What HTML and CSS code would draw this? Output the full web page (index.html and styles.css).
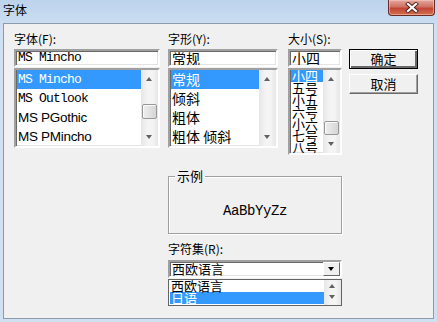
FILE: index.html
```html
<!DOCTYPE html>
<html lang="zh-CN">
<head>
    <meta charset="UTF-8">
    <title>字体</title>
    <link rel="stylesheet" href="styles.css">
</head>
<body>
    <div class="window">
        <div class="titlebar">
            <span class="title">字体</span>
            <button class="close-btn" aria-label="关闭">
                <svg width="14" height="11" viewBox="0 0 14 11">
                    <path d="M3 2 L11 9 M11 2 L3 9" stroke="#4a2320" stroke-width="4" stroke-linecap="square"/>
                    <path d="M3 2 L11 9 M11 2 L3 9" stroke="#fff" stroke-width="2.2" stroke-linecap="square"/>
                </svg>
            </button>
        </div>

        <div class="client">
            <div class="top-row">
                <!-- Font name -->
                <div class="col col-font">
                    <div class="label">字体(F):</div>
                    <div class="field mono">MS Mincho</div>
                    <div class="listbox list-font">
                        <ul class="items">
                            <li class="item selected mono">MS Mincho</li>
                            <li class="item mono">MS Outlook</li>
                            <li class="item sans">MS PGothic</li>
                            <li class="item sans">MS PMincho</li>
                        </ul>
                        <div class="scrollbar">
                            <div class="arrow up"></div>
                            <div class="track"><div class="thumb" style="margin-top: 17px; height: 15px;"></div></div>
                            <div class="arrow down"></div>
                        </div>
                    </div>
                </div>

                <!-- Font style -->
                <div class="col col-style">
                    <div class="label">字形(Y):</div>
                    <div class="field">常规</div>
                    <div class="listbox list-style">
                        <ul class="items">
                            <li class="item selected">常规</li>
                            <li class="item">倾斜</li>
                            <li class="item">粗体</li>
                            <li class="item">粗体 倾斜</li>
                        </ul>
                        <div class="scrollbar">
                            <div class="arrow up"></div>
                            <div class="track"></div>
                            <div class="arrow down"></div>
                        </div>
                    </div>
                </div>

                <!-- Size -->
                <div class="col col-size">
                    <div class="label">大小(S):</div>
                    <div class="field">小四</div>
                    <div class="listbox list-size">
                        <ul class="items">
                            <li class="item selected">小四</li>
                            <li class="item">五号</li>
                            <li class="item">小五</li>
                            <li class="item">六号</li>
                            <li class="item">小六</li>
                            <li class="item">七号</li>
                            <li class="item">八号</li>
                        </ul>
                        <div class="scrollbar">
                            <div class="arrow up"></div>
                            <div class="track"><div class="thumb" style="margin-top: 34px; height: 14px;"></div></div>
                            <div class="arrow down"></div>
                        </div>
                    </div>
                </div>

                <!-- Buttons -->
                <div class="col col-buttons">
                    <button class="btn default">确定</button>
                    <button class="btn">取消</button>
                </div>
            </div>

            <div class="lower">
                <div class="sample">
                    <span class="sample-label">示例</span>
                    <span class="sample-text">AaBbYyZz</span>
                </div>

                <div class="label charset-label">字符集(R):</div>
                <div class="combo">
                    <span class="combo-value">西欧语言</span>
                    <span class="combo-btn"></span>
                </div>
                <div class="dropdown">
                    <ul class="items">
                        <li class="item">西欧语言</li>
                        <li class="item selected">日语</li>
                    </ul>
                    <div class="scrollbar">
                        <div class="arrow up"></div>
                        <div class="arrow down"></div>
                    </div>
                </div>
            </div>
        </div>
    </div>
</body>
</html>
```

FILE: styles.css
```css
/* General */
* {
    box-sizing: border-box;
}

body {
    margin: 0;
    width: 437px;
    height: 322px;
    overflow: hidden;
    font-family: "Noto Sans CJK SC", "Liberation Sans", sans-serif;
    font-size: 12px;
    color: #000;
}

ul {
    list-style: none;
    margin: 0;
    padding: 0;
}

.mono {
    font-family: "Liberation Mono", "Noto Sans CJK SC", monospace;
    letter-spacing: -0.8px;
}

.sans {
    font-family: "Liberation Sans", sans-serif;
}

/* Window frame */
.window {
    height: 322px;
    display: flex;
    flex-direction: column;
    padding: 0 3px 3px;
    background: linear-gradient(#bcd3ec, #cfe0f3 30px, #cfe0f3);
}

.titlebar {
    height: 23px;
    display: flex;
    align-items: flex-start;
    justify-content: space-between;
    flex-shrink: 0;
}

.title {
    font-size: 12px;
    line-height: 14px;
    margin-top: 3px;
}

.close-btn {
    width: 47px;
    height: 16px;
    margin-right: -1px;
    padding: 0;
    border: 1px solid #6b2b24;
    border-top: none;
    border-radius: 0 0 4px 4px;
    background: linear-gradient(#e3a79d, #cf7262 45%, #c24534 55%, #d0704f);
    box-shadow: inset 0 0 0 1px rgba(255, 210, 200, 0.5);
    display: flex;
    align-items: center;
    justify-content: center;
}

/* Client area */
.client {
    flex: 1;
    background-color: #f0f0f0;
    border: 1px solid #8d9aab;
    padding: 8px 0 0 10px;
}

.top-row {
    display: flex;
    align-items: flex-start;
}

.col {
    display: flex;
    flex-direction: column;
}

.col-font {
    width: 146px;
    margin-right: 8px;
}

.col-style {
    width: 110px;
    margin-right: 10px;
}

.col-size {
    width: 54px;
    margin-right: 7px;
}

.col-buttons {
    width: 69px;
    padding-top: 17px;
    gap: 5px;
}

.label {
    height: 14px;
    line-height: 14px;
    margin-bottom: 3px;
    white-space: nowrap;
}

/* Sunken boxes */
.field,
.listbox,
.combo {
    background-color: #fff;
    border-style: solid;
    border-width: 2px;
    border-color: #a0a0a0 #fff #fff #a0a0a0;
    box-shadow: inset 1px 1px 0 #696969, inset -1px -1px 0 #e3e3e3;
}

.field {
    height: 18px;
    line-height: 14px;
    font-size: 14px;
    padding-left: 2px;
    margin-bottom: 1px;
    white-space: nowrap;
    overflow: hidden;
}

.field.mono {
    font-size: 13px;
}

.listbox {
    display: flex;
    overflow: hidden;
}

.list-font,
.list-style {
    height: 80px;
}

.list-size {
    height: 87px;
}

.items {
    flex: 1;
    overflow: hidden;
    padding-left: 1px;
}

.item {
    height: 19px;
    line-height: 19px;
    font-size: 14px;
    white-space: nowrap;
    padding-left: 1px;
}

.item.mono {
    font-size: 13px;
}

.item.sans {
    font-size: 13.5px;
    letter-spacing: -0.3px;
}

.item.selected {
    background-color: #3399ff;
    color: #fff;
}

.list-size .item {
    height: 12px;
    line-height: 12px;
    font-size: 13px;
    overflow: visible;
}

/* Scrollbars */
.scrollbar {
    width: 17px;
    display: flex;
    flex-direction: column;
    background: linear-gradient(90deg, #e6e6e6, #f4f4f4 40%, #f4f4f4 70%, #e6e6e6);
}

.arrow {
    height: 17px;
    flex-shrink: 0;
    position: relative;
}

.arrow::after {
    content: "";
    position: absolute;
    left: 5px;
    top: 7px;
    border-left: 3.5px solid transparent;
    border-right: 3.5px solid transparent;
}

.arrow.up::after {
    border-bottom: 4px solid #606060;
}

.arrow.down::after {
    top: 6px;
    border-top: 4px solid #606060;
}

.track {
    flex: 1;
}

.thumb {
    margin-left: 1px;
    width: 15px;
    border: 1px solid #979797;
    border-radius: 2px;
    background: linear-gradient(90deg, #eee, #e2e2e2 50%, #d6d6d6);
    box-shadow: inset 1px 1px 0 #fafafa;
}

/* Buttons */
.btn {
    height: 20px;
    padding: 0;
    font-family: "Noto Sans CJK SC", sans-serif;
    font-size: 13px;
    line-height: 14px;
    background-color: #f0f0f0;
    border-style: solid;
    border-width: 1px;
    border-color: #fff #696969 #696969 #fff;
    box-shadow: inset -1px -1px 0 #a0a0a0;
}

.btn.default {
    height: 20px;
    border: 1px solid #000;
    box-shadow: inset 1px 1px 0 #fff, inset -2px -2px 0 #696969, inset -1px -1px 0 #a0a0a0;
}

/* Lower section */
.lower {
    margin-left: 154px;
    width: 174px;
    display: flex;
    flex-direction: column;
}

.sample {
    position: relative;
    margin-top: 21px;
    height: 58px;
    border: 1px solid #a0a0a0;
    box-shadow: 1px 1px 0 #fff, inset 1px 1px 0 #fff;
    display: flex;
    align-items: center;
    justify-content: center;
}

.sample-label {
    position: absolute;
    left: 6px;
    top: -8px;
    padding: 0 2px;
    line-height: 14px;
    font-size: 13px;
    background-color: #f0f0f0;
}

.sample-text {
    font-family: "Liberation Mono", monospace;
    font-size: 14px;
    letter-spacing: -0.4px;
    margin-top: 12px;
}

.charset-label {
    margin-top: 8px;
    margin-bottom: 4px;
}

.combo {
    height: 18px;
    display: flex;
    align-items: center;
    justify-content: space-between;
}

.combo-value {
    font-size: 13px;
    line-height: 14px;
    padding-left: 2px;
}

.combo-btn {
    width: 17px;
    height: 14px;
    background-color: #f0f0f0;
    border-style: solid;
    border-width: 1px;
    border-color: #fff #696969 #696969 #fff;
    position: relative;
}

.combo-btn::after {
    content: "";
    position: absolute;
    left: 4px;
    top: 4px;
    border-left: 3.5px solid transparent;
    border-right: 3.5px solid transparent;
    border-top: 4px solid #000;
}

.dropdown {
    margin-top: 1px;
    height: 27px;
    display: flex;
    background-color: #fff;
    border: 1px solid #646464;
}

.dropdown .item {
    height: 12px;
    line-height: 12px;
    font-size: 13px;
    overflow: visible;
}

.dropdown .arrow {
    height: 12px;
}

.dropdown .arrow.up::after {
    top: 4px;
}

.dropdown .arrow.down::after {
    top: 3px;
}
```
